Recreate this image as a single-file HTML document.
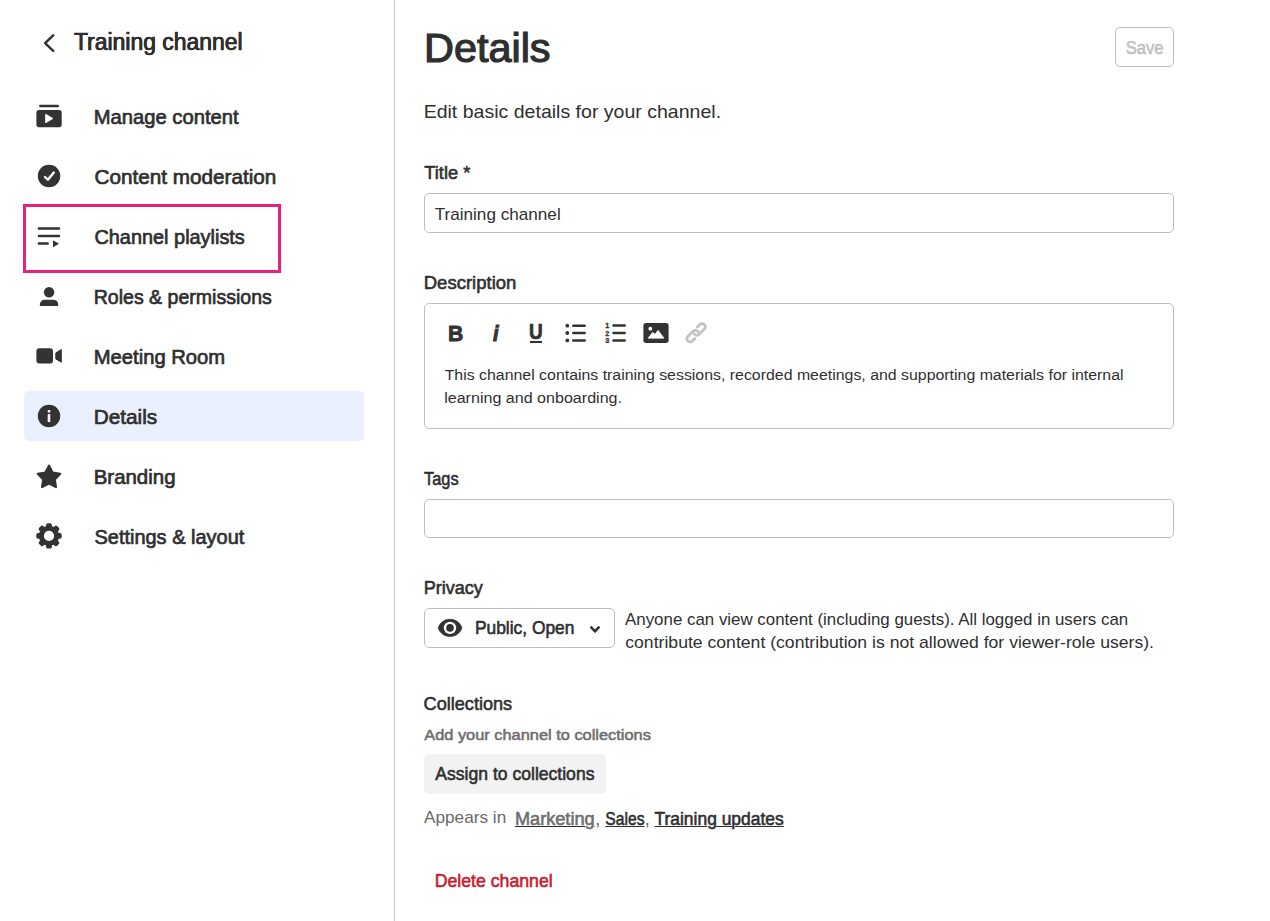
<!DOCTYPE html>
<html lang="en">
<head>
<meta charset="utf-8">
<title>Details - Training channel</title>
<style>
html,body{margin:0;padding:0;background:#fff}
body{width:1270px;height:921px;position:relative;overflow:hidden;font-family:"Liberation Sans",sans-serif;color:#333}
h1,h2,p,label,span,a,button{margin:0;padding:0;font:inherit;color:inherit;text-decoration:none;border:0;background:none}
.t{position:absolute;white-space:nowrap;transform-origin:0 50%;display:block}
.abs{position:absolute;box-sizing:border-box}
svg{position:absolute;overflow:visible}
.lk{text-decoration:underline;text-decoration-thickness:1.2px;text-underline-offset:1px;text-decoration-skip-ink:auto}
#divider{left:394px;top:0;width:1px;height:921px;background:#c6c6c6}
#hl{left:23px;top:204px;width:258px;height:69px;border:3px solid #e8217a}
#active{left:24px;top:391px;width:340px;height:50px;border-radius:5px;background:#eaf0fe}
.box{border:1px solid #bebebe;border-radius:5px;background:#fff}
#in_title{left:424px;top:193px;width:750px;height:40px}
#in_desc{left:424px;top:303px;width:750px;height:126px}
#in_tags{left:424px;top:499px;width:750px;height:39px}
#in_priv{left:424px;top:608px;width:191px;height:40px}
#btn_save{left:1115px;top:27px;width:59px;height:40px;border:1px solid #bdbdbd;border-radius:5px}
#btn_assign{left:424px;top:754px;width:182px;height:40px;border-radius:5px;background:#f2f2f2}
#tb_b{left:448.2px;top:319px;font-size:22.8px;line-height:29px;font-weight:700;color:#333;transform:scaleX(.93);-webkit-text-stroke:.9px}
#tb_i{left:492.9px;top:319px;font-size:21.8px;line-height:30px;font-weight:700;color:#333;font-style:italic;transform:scaleX(.92);-webkit-text-stroke:1px}
#tb_u{left:529.3px;top:318.6px;font-size:21.4px;line-height:27px;font-weight:700;color:#333;transform:scaleX(.89);-webkit-text-stroke:.7px}
#tb_ul{left:529.8px;top:340.6px;width:12.3px;height:2.1px;background:#333}
#t_hdr{left:73px;top:29px;font-size:23px;line-height:26px;height:26px;font-weight:400;color:#2f2f2f;transform:translateX(0.95px) scaleX(0.9968);-webkit-text-stroke:.45px;text-shadow:.3px 0 0,-.3px 0 0;}
#n1{left:93px;top:105px;font-size:20.5px;line-height:23px;height:23px;font-weight:400;color:#2f2f2f;transform:translateX(0.70px) scaleX(0.9856);-webkit-text-stroke:0.70px;}
#n2{left:94px;top:165px;font-size:20.5px;line-height:23px;height:23px;font-weight:400;color:#2f2f2f;transform:translateX(0.45px) scaleX(1.0103);-webkit-text-stroke:0.70px;}
#n3{left:94px;top:225px;font-size:20.5px;line-height:23px;height:23px;font-weight:400;color:#2f2f2f;transform:translateX(0.45px) scaleX(0.9702);-webkit-text-stroke:0.70px;}
#n4{left:93px;top:285px;font-size:20.5px;line-height:23px;height:23px;font-weight:400;color:#2f2f2f;transform:translateX(0.70px) scaleX(0.9533);-webkit-text-stroke:0.70px;}
#n5{left:93px;top:345px;font-size:20.5px;line-height:23px;height:23px;font-weight:400;color:#2f2f2f;transform:translateX(0.70px) scaleX(0.9864);-webkit-text-stroke:0.70px;}
#n6{left:93px;top:405px;font-size:20.5px;line-height:23px;height:23px;font-weight:400;color:#2f2f2f;transform:translateX(0.70px) scaleX(1.0134);-webkit-text-stroke:0.70px;}
#n7{left:93px;top:465px;font-size:20.5px;line-height:23px;height:23px;font-weight:400;color:#2f2f2f;transform:translateX(0.70px) scaleX(0.9970);-webkit-text-stroke:0.70px;}
#n8{left:94px;top:525px;font-size:20.5px;line-height:23px;height:23px;font-weight:400;color:#2f2f2f;transform:translateX(0.45px) scaleX(0.9741);-webkit-text-stroke:0.70px;}
#h1{left:424px;top:26px;font-size:40px;line-height:44px;height:44px;font-weight:400;color:#2f2f2f;transform:translateX(0.05px) scaleX(1.0343);-webkit-text-stroke:1.2px;}
#sub{left:423px;top:101px;font-size:19px;line-height:21px;height:21px;font-weight:400;color:#2f2f2f;transform:translateX(0.65px) scaleX(1.0278);}
#l_title{left:424px;top:162px;font-size:19px;line-height:21px;height:21px;font-weight:400;color:#2f2f2f;transform:translateX(0.30px) scaleX(0.9609);-webkit-text-stroke:0.60px;}
#v_title{left:434px;top:205px;font-size:17px;line-height:19px;height:19px;font-weight:400;color:#2f2f2f;transform:translateX(0.65px) scaleX(1.0080);}
#l_desc{left:423px;top:272px;font-size:19px;line-height:21px;height:21px;font-weight:400;color:#2f2f2f;transform:translateX(0.75px) scaleX(0.9743);-webkit-text-stroke:0.60px;}
#d1{left:444px;top:366px;font-size:15.5px;line-height:17px;height:17px;font-weight:400;color:#2f2f2f;transform:translateX(0.65px) scaleX(1.0246);}
#d2{left:444px;top:389px;font-size:15.5px;line-height:17px;height:17px;font-weight:400;color:#2f2f2f;transform:translateX(0.15px) scaleX(1.0372);}
#l_tags{left:424px;top:468px;font-size:19px;line-height:21px;height:21px;font-weight:400;color:#2f2f2f;transform:translateX(0.00px) scaleX(0.8621);-webkit-text-stroke:0.60px;}
#l_priv{left:423px;top:577px;font-size:19px;line-height:21px;height:21px;font-weight:400;color:#2f2f2f;transform:translateX(0.65px) scaleX(0.9489);-webkit-text-stroke:0.60px;}
#v_priv{left:474px;top:617px;font-size:19px;line-height:21px;height:21px;font-weight:400;color:#2f2f2f;transform:translateX(0.90px) scaleX(0.9149);-webkit-text-stroke:0.60px;}
#p1{left:625px;top:610px;font-size:17px;line-height:19px;height:19px;font-weight:400;color:#2f2f2f;transform:translateX(0.00px) scaleX(0.9934);}
#p2{left:625px;top:633px;font-size:17px;line-height:19px;height:19px;font-weight:400;color:#2f2f2f;transform:translateX(0.25px) scaleX(1.0363);}
#l_coll{left:423px;top:693px;font-size:19px;line-height:21px;height:21px;font-weight:400;color:#2f2f2f;transform:translateX(0.60px) scaleX(0.9524);-webkit-text-stroke:0.60px;}
#coll_sub{left:424px;top:726px;font-size:15.5px;line-height:17px;height:17px;font-weight:400;color:#6e6e6e;transform:translateX(0.25px) scaleX(1.0563);-webkit-text-stroke:0.55px;}
#assign{left:435px;top:763px;font-size:19px;line-height:21px;height:21px;font-weight:400;color:#2f2f2f;transform:translateX(0.30px) scaleX(0.9245);-webkit-text-stroke:0.60px;}
#app{left:424px;top:808px;font-size:17px;line-height:19px;height:19px;font-weight:400;color:#6a6a6a;transform:translateX(0.00px) scaleX(1.0115);}
#lk1{left:514px;top:808px;font-size:19px;line-height:21px;height:21px;font-weight:400;color:#6e6e6e;transform:translateX(0.90px) scaleX(0.9560);-webkit-text-stroke:0.60px;text-decoration-color:#2f2f2f;}
#c1{left:595px;top:809px;font-size:18px;line-height:20px;height:20px;font-weight:400;color:#666;transform:translateX(0.30px) scaleX(1.0000);}
#lk2{left:605px;top:808px;font-size:19px;line-height:21px;height:21px;font-weight:400;color:#2f2f2f;transform:translateX(0.35px) scaleX(0.8237);-webkit-text-stroke:0.60px;}
#c2{left:644px;top:809px;font-size:18px;line-height:20px;height:20px;font-weight:400;color:#666;transform:translateX(0.70px) scaleX(1.0000);}
#lk3{left:654px;top:808px;font-size:19px;line-height:21px;height:21px;font-weight:400;color:#2f2f2f;transform:translateX(0.50px) scaleX(0.9173);-webkit-text-stroke:0.60px;}
#del{left:434px;top:870px;font-size:19px;line-height:21px;height:21px;font-weight:400;color:#c5202f;transform:translateX(0.75px) scaleX(0.9304);-webkit-text-stroke:0.60px;}
#save{left:1125px;top:37px;font-size:19px;line-height:21px;height:21px;font-weight:400;color:#bfbfbf;transform:translateX(0.65px) scaleX(0.8746);-webkit-text-stroke:0.60px;}
</style>
</head>
<body>

<aside id="sidebar">
  <div class="abs" id="hl"></div>
  <div class="abs" id="active"></div>
  <a id="back"><svg id="i_back" style="left:40px;top:30px" width="20" height="26" viewBox="40 30 20 26"><polyline points="53.2,35.3 45.1,43.05 53.2,50.8" fill="none" stroke="#333" stroke-width="2.5" stroke-linecap="round" stroke-linejoin="round"/></svg></a>
  <h2 class="t" id="t_hdr">Training channel</h2>
  <nav>
    <a class="item"><svg style="left:34px;top:102px" width="30" height="28" viewBox="34 102 30 28" ><rect x="39.1" y="104.7" width="19.9" height="2.5" rx="1.2" fill="#333"/><rect x="36.4" y="110" width="25.3" height="17.2" rx="2.6" fill="#333"/><path d="M45.8,114.6 L52.4,118.5 L45.8,122.4 Z" fill="#fff" stroke="#fff" stroke-width="1.2" stroke-linejoin="round"/></svg><span class="t" id="n1">Manage content</span></a>
    <a class="item"><svg style="left:36px;top:163px" width="26" height="26" viewBox="36 163 26 26" ><circle cx="49" cy="176" r="11.25" fill="#333"/><polyline points="45,177.1 47.9,179.7 53.8,172.6" fill="none" stroke="#fff" stroke-width="2.4" stroke-linecap="round" stroke-linejoin="round"/></svg><span class="t" id="n2">Content moderation</span></a>
    <a class="item"><svg style="left:36px;top:225px" width="26" height="24" viewBox="36 225 26 24" ><g stroke="#333" stroke-width="2.45" stroke-linecap="round"><line x1="38.9" y1="228.5" x2="59" y2="228.5"/><line x1="38.9" y1="236" x2="59" y2="236"/><line x1="38.9" y1="243.5" x2="47.7" y2="243.5"/></g><path d="M53,240.3 L59,243.75 L53,247.2 Z" fill="#333"/></svg><span class="t" id="n3">Channel playlists</span></a>
    <a class="item"><svg style="left:38px;top:285px" width="22" height="22" viewBox="38 285 22 22" ><circle cx="49.05" cy="292.2" r="5.2" fill="#333"/><path d="M39.9,305.9 v-1.4 a4.8,4.8 0 0 1 4.8,-4.8 h8.7 a4.8,4.8 0 0 1 4.8,4.8 v1.4 z" fill="#333"/></svg><span class="t" id="n4">Roles &amp; permissions</span></a>
    <a class="item"><svg style="left:35px;top:346px" width="28" height="20" viewBox="35 346 28 20" ><rect x="36.4" y="348.3" width="16.6" height="15.3" rx="3" fill="#333"/><path d="M55.8,352.9 L61.3,349.6 V362.2 L55.8,358.9 Z" fill="#333" stroke="#333" stroke-width="1" stroke-linejoin="round"/></svg><span class="t" id="n5">Meeting Room</span></a>
    <a class="item on"><svg style="left:36px;top:403px" width="26" height="26" viewBox="36 403 26 26" ><circle cx="49" cy="416" r="11.25" fill="#333"/><rect x="47.7" y="410.1" width="2.6" height="2.5" rx=".7" fill="#fff"/><rect x="47.7" y="414.1" width="2.6" height="8" rx=".9" fill="#fff"/></svg><span class="t" id="n6">Details</span></a>
    <a class="item"><svg style="left:35px;top:463px" width="28" height="27" viewBox="35 463 28 27" ><polygon points="49.00,465.70 52.59,472.56 60.22,473.85 54.80,479.39 55.94,487.05 49.00,483.60 42.06,487.05 43.20,479.39 37.78,473.85 45.41,472.56" fill="#333" stroke="#333" stroke-width="2.2" stroke-linejoin="round"/></svg><span class="t" id="n7">Branding</span></a>
    <a class="item"><svg style="left:35px;top:522px" width="28" height="28" viewBox="35 522 28 28" ><circle cx="49" cy="535.9" r="7.6" fill="none" stroke="#333" stroke-width="5"/><rect x="46.1" y="523.2" width="5.8" height="6" rx="1.7" fill="#333" transform="rotate(0 49 535.9)"/><rect x="46.1" y="523.2" width="5.8" height="6" rx="1.7" fill="#333" transform="rotate(45 49 535.9)"/><rect x="46.1" y="523.2" width="5.8" height="6" rx="1.7" fill="#333" transform="rotate(90 49 535.9)"/><rect x="46.1" y="523.2" width="5.8" height="6" rx="1.7" fill="#333" transform="rotate(135 49 535.9)"/><rect x="46.1" y="523.2" width="5.8" height="6" rx="1.7" fill="#333" transform="rotate(180 49 535.9)"/><rect x="46.1" y="523.2" width="5.8" height="6" rx="1.7" fill="#333" transform="rotate(225 49 535.9)"/><rect x="46.1" y="523.2" width="5.8" height="6" rx="1.7" fill="#333" transform="rotate(270 49 535.9)"/><rect x="46.1" y="523.2" width="5.8" height="6" rx="1.7" fill="#333" transform="rotate(315 49 535.9)"/></svg><span class="t" id="n8">Settings &amp; layout</span></a>
  </nav>
</aside>
<div class="abs" id="divider"></div>

<main id="main">
  <h1 class="t" id="h1">Details</h1>
  <div class="abs" id="btn_save"></div><button class="t" id="save">Save</button>
  <p class="t" id="sub">Edit basic details for your channel.</p>

  <label class="t" id="l_title">Title *</label>
  <div class="abs box" id="in_title"></div><span class="t" id="v_title">Training channel</span>

  <label class="t" id="l_desc">Description</label>
  <div class="abs box" id="in_desc"></div>
  <span class="t tb" id="tb_b">B</span><span class="t tb" id="tb_i">i</span><span class="t tb" id="tb_u">U</span><div class="abs" id="tb_ul"></div><svg style="left:564px;top:322px" width="24" height="22" viewBox="564 322 24 22" ><circle cx="567.3" cy="325.7" r="1.9" fill="#333"/><line x1="573.3" y1="325.7" x2="584.7" y2="325.7" stroke="#333" stroke-width="2.5" stroke-linecap="round"/><circle cx="567.3" cy="333.0" r="1.9" fill="#333"/><line x1="573.3" y1="333.0" x2="584.7" y2="333.0" stroke="#333" stroke-width="2.5" stroke-linecap="round"/><circle cx="567.3" cy="340.4" r="1.9" fill="#333"/><line x1="573.3" y1="340.4" x2="584.7" y2="340.4" stroke="#333" stroke-width="2.5" stroke-linecap="round"/></svg><svg style="left:604px;top:321px" width="24" height="24" viewBox="604 321 24 24" ><text x="605.2" y="327.9" font-family="Liberation Sans, sans-serif" font-weight="700" font-size="7.2" fill="#333" stroke="#333" stroke-width=".3">1</text><line x1="613.5" y1="325.5" x2="624.7" y2="325.5" stroke="#333" stroke-width="2.5" stroke-linecap="round"/><text x="605.2" y="335.6" font-family="Liberation Sans, sans-serif" font-weight="700" font-size="7.2" fill="#333" stroke="#333" stroke-width=".3">2</text><line x1="613.5" y1="333.0" x2="624.7" y2="333.0" stroke="#333" stroke-width="2.5" stroke-linecap="round"/><text x="605.2" y="343.2" font-family="Liberation Sans, sans-serif" font-weight="700" font-size="7.2" fill="#333" stroke="#333" stroke-width=".3">3</text><line x1="613.5" y1="340.5" x2="624.7" y2="340.5" stroke="#333" stroke-width="2.5" stroke-linecap="round"/></svg><svg style="left:642px;top:322px" width="28" height="22" viewBox="642 322 28 22" ><rect x="643.4" y="323" width="25.2" height="19.9" rx="2.6" fill="#333"/><circle cx="650.3" cy="328.7" r="1.9" fill="#fff"/><path d="M648.3,338.1 L652.7,332.5 L655,334.4 L658.1,330.5 L663.8,338.1 Z" fill="#fff" stroke="#fff" stroke-width="1" stroke-linejoin="round"/></svg><svg style="left:684px;top:321px" width="24" height="23" viewBox="684 321 24 23" ><g fill="none" stroke="#c2c2c2" stroke-width="2.8" stroke-linecap="round" transform="translate(696.1 332.8) rotate(-45)"><path d="M5,-3.2 H8.5 A3.2,3.2 0 0 1 8.5,3.2 H1 A3.2,3.2 0 0 1 -2.15,-0.55"/><path d="M-5,3.2 H-8.5 A3.2,3.2 0 0 1 -8.5,-3.2 H-1 A3.2,3.2 0 0 1 2.15,0.55"/></g></svg>
  <p class="t" id="d1">This channel contains training sessions, recorded meetings, and supporting materials for internal</p>
  <p class="t" id="d2">learning and onboarding.</p>

  <label class="t" id="l_tags">Tags</label>
  <div class="abs box" id="in_tags"></div>

  <label class="t" id="l_priv">Privacy</label>
  <div class="abs box" id="in_priv"></div>
  <svg style="left:436px;top:617px" width="28" height="22" viewBox="436 617 28 22" ><path d="M438.2,627.9 C440.0,622.6 444.6,619.3 450.05,619.3 C455.5,619.3 460.1,622.6 461.9,627.9 C460.1,633.2 455.5,636.4 450.05,636.4 C444.6,636.4 440.0,633.2 438.2,627.9 Z" fill="#333" stroke="#333" stroke-width=".8" stroke-linejoin="round"/><circle cx="450.0" cy="627.9" r="6.2" fill="#fff"/><circle cx="450.0" cy="627.9" r="3.8" fill="#333"/></svg><svg style="left:588px;top:624px" width="14" height="12" viewBox="588 624 14 12" ><polyline points="591.25,627.45 595,631.45 598.75,627.45" fill="none" stroke="#333" stroke-width="2.6" stroke-linecap="round" stroke-linejoin="round"/></svg>
  <span class="t" id="v_priv">Public, Open</span>
  <p class="t" id="p1">Anyone can view content (including guests). All logged in users can</p>
  <p class="t" id="p2">contribute content (contribution is not allowed for viewer-role users).</p>

  <label class="t" id="l_coll">Collections</label>
  <p class="t" id="coll_sub">Add your channel to collections</p>
  <div class="abs" id="btn_assign"></div><button class="t" id="assign">Assign to collections</button>
  <span class="t" id="app">Appears in</span>
  <a class="t lk" id="lk1">Marketing</a><span class="t" id="c1">,</span>
  <a class="t lk" id="lk2">Sales</a><span class="t" id="c2">,</span>
  <a class="t lk" id="lk3">Training updates</a>
  <a class="t" id="del">Delete channel</a>
</main>

</body>
</html>
